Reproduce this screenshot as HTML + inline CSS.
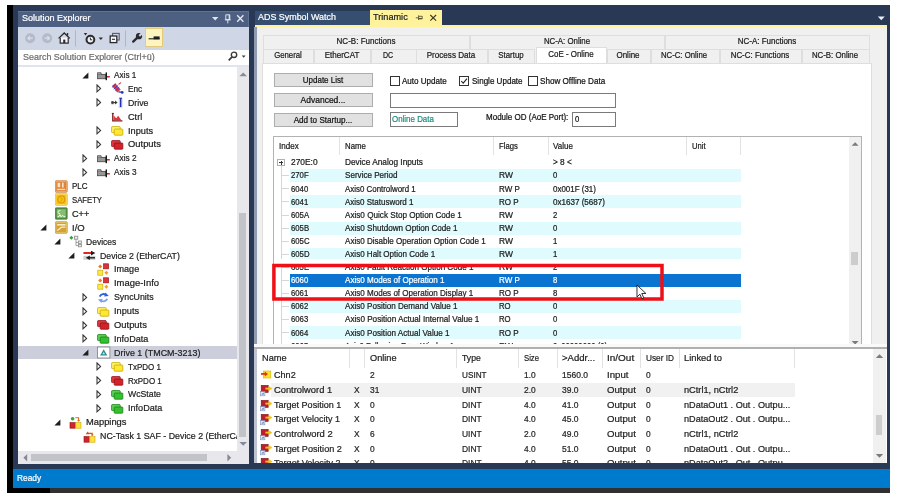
<!DOCTYPE html>
<html lang="en"><head><meta charset="utf-8"><title>TwinCAT - Trinamic CoE Online</title>
<style>
html,body{margin:0;padding:0;background:#fff;}
body{width:900px;height:499px;position:relative;overflow:hidden;font-family:"Liberation Sans",sans-serif;}
#root{position:absolute;left:0;top:0;width:900px;height:499px;overflow:hidden;background:#fff;will-change:transform;}
#root div,#root span,#root svg{position:absolute;}
#root div{box-sizing:border-box;}
.t{white-space:nowrap;font-family:"Liberation Sans",sans-serif;-webkit-text-stroke:0.22px;}
.clip{overflow:hidden;}
</style></head><body><div id="root">
<div style="left:7.00px;top:5.00px;width:883.00px;height:488.00px;background:#293955;"></div>
<div style="left:7.00px;top:5.00px;width:6.00px;height:488.00px;background:#000;"></div>
<div style="left:7.00px;top:487.80px;width:883.00px;height:5.20px;background:#303030;"></div>
<div style="left:7.00px;top:487.80px;width:43.00px;height:5.20px;background:#000;"></div>
<div style="left:13.00px;top:469.20px;width:877.00px;height:18.60px;background:#007acc;"></div>
<span class="t" style="left:16.50px;top:471.15px;font-size:9.3px;line-height:14px;color:#fff;transform:scaleX(0.900);transform-origin:left center;">Ready</span>
<div style="left:18.00px;top:10.50px;width:231.40px;height:16.50px;background:#4d6082;border-top:1px solid #5e729a;border-right:1px solid #5e729a;"></div>
<span class="t" style="left:21.50px;top:11.45px;font-size:9.3px;line-height:14px;color:#fff;transform:scaleX(0.969);transform-origin:left center;">Solution Explorer</span>
<div style="left:18.00px;top:27.00px;width:231.00px;height:22.50px;background:#cfd6e5;"></div>
<div style="left:18.00px;top:49.50px;width:231.00px;height:15.50px;background:#fff;"></div>
<div style="left:18.00px;top:65.00px;width:231.00px;height:1.50px;background:#dfe4ee;"></div>
<div style="left:18.00px;top:66.50px;width:231.00px;height:397.50px;background:#fff;"></div>
<span class="t" style="left:22.50px;top:49.85px;font-size:9.3px;line-height:14px;color:#6d6d6d;transform:scaleX(0.963);transform-origin:left center;">Search Solution Explorer (Ctrl+ü)</span>
<svg style="left:210px;top:13px" width="36" height="12" viewBox="0 0 36 12"><path d="M2 4h6.4l-3.2 3.4z" fill="#dfe6f2"/><path d="M15.800 1.800h4v5h-4z M14.800 6.800h6 M17.800 6.800v3.600" fill="none" stroke="#dfe6f2" stroke-width="0.95"/><path d="M19.200 1.800v5" stroke="#dfe6f2" stroke-width="1.100"/><path d="M27.2 2.2l6.2 6.6 M33.4 2.2l-6.2 6.6" stroke="#e6ebf5" stroke-width="1.3" fill="none"/></svg>
<svg style="left:18px;top:27px" width="231" height="23" viewBox="0 0 231 23"><circle cx="12.2" cy="11.2" r="5" fill="#b5bac9"/><path d="M14.8 11.2h-4.6m1.8-2l-2 2 2 2" stroke="#dde1ea" stroke-width="1.2" fill="none"/><circle cx="29.2" cy="11.2" r="5" fill="#b5bac9"/><path d="M26.6 11.2h4.6m-1.8-2l2 2-2 2" stroke="#dde1ea" stroke-width="1.2" fill="none"/><path d="M40.6 11.4l5.6-5.4 5.6 5.4" fill="none" stroke="#2b2b2b" stroke-width="1.3"/><path d="M42.2 10.6v5.6h8v-5.6" fill="#f4f6fa" stroke="#2b2b2b" stroke-width="1.2"/><rect x="45.2" y="12.6" width="2.1" height="3.4" fill="#2b2b2b"/><rect x="48.8" y="6" width="1.4" height="2.6" fill="#2b2b2b"/><rect x="57" y="3.5" width="1" height="16" fill="#aeb6c8"/><circle cx="72.4" cy="12.6" r="3.9" fill="#eef1f7" stroke="#2b2b2b" stroke-width="2"/><path d="M72.4 10.6v2.2h1.8" stroke="#2b2b2b" stroke-width="1" fill="none"/><path d="M65.8 6l3.4 0-1.7 2.6z" fill="#2b2b2b"/><path d="M80.6 10.6h4.4l-2.2 2.4z" fill="#2b2b2b"/><rect x="94.6" y="6.4" width="6.6" height="6.6" fill="#cfd6e5" stroke="#555b68" stroke-width="1.1"/><rect x="92.2" y="9" width="6.6" height="6.6" fill="#f4f6fa" stroke="#2b2b2b" stroke-width="1.3"/><path d="M94 12.3h3" stroke="#2b2b2b" stroke-width="1.1"/><rect x="107" y="3.5" width="1" height="16" fill="#aeb6c8"/><path d="M115.200 14.600L119.600 10.400" stroke="#2b2b2b" stroke-width="2.300" fill="none" stroke-linecap="round"/><circle cx="121" cy="9.200" r="3.100" fill="#2b2b2b"/><path d="M121.300 8.900L124.800 5.400" stroke="#cfd6e5" stroke-width="2.100"/><rect x="127.4" y="1.4" width="17" height="18" fill="#fdf4bf" stroke="#e5c365" stroke-width="0.8"/><path d="M130.6 11.8h11" stroke="#1e1e1e" stroke-width="1.1"/><rect x="135.6" y="9.4" width="6" height="2.9" fill="#1e1e1e"/></svg>
<svg style="left:226px;top:50px" width="22" height="14" viewBox="0 0 22 14"><circle cx="8" cy="4.8" r="2.7" fill="none" stroke="#3b3b3b" stroke-width="1.4"/><path d="M6.1 6.8l-3.4 3.6" stroke="#3b3b3b" stroke-width="1.7"/><path d="M15.8 5.6h3.8l-1.9 2.1z" fill="#3b3b3b"/></svg>
<div style="left:236.50px;top:66.50px;width:12.50px;height:384.00px;background:#e8e8ec;"></div>
<div style="left:239.20px;top:213.00px;width:6.80px;height:224.00px;background:#c2c3c9;"></div>
<svg style="left:236.5px;top:68px" width="12.5" height="12"><path d="M2.4 8.2l3.8-3.8 3.8 3.8z" fill="#868999"/></svg>
<svg style="left:236.5px;top:438px" width="12.5" height="12"><path d="M2.4 4l3.8 3.8 3.8-3.8z" fill="#868999"/></svg>
<div style="left:18.00px;top:450.50px;width:231.00px;height:13.50px;background:#e8e8ec;"></div>
<div style="left:31.00px;top:453.70px;width:176.00px;height:7.30px;background:#c2c3c9;"></div>
<svg style="left:18px;top:450.5px" width="14" height="13.5"><path d="M9.2 3l-3.8 3.8 3.8 3.8z" fill="#868999"/></svg>
<svg style="left:222px;top:450.5px" width="14" height="13.5"><path d="M5.4 3l3.8 3.8-3.8 3.8z" fill="#868999"/></svg>
<div style="left:236.50px;top:450.50px;width:12.50px;height:13.50px;background:#e8e8ec;"></div>
<div class="clip" style="left:18px;top:66.5px;width:218.5px;height:384px;">
<svg style="left:63.70px;top:5.10px" width="8" height="8"><path d="M6.400 0.400v6h-6z" fill="#1e1e1e"/></svg>
<svg style="left:79.10px;top:2.00px" width="13.5" height="13" viewBox="0 0 13.5 13"><rect x="0.300" y="5.400" width="8.400" height="4.300" fill="#979797" stroke="#4c4c4c" stroke-width="0.900"/><path d="M0.300 5.400v-1.600h3.800v1.600" fill="#b5b5b5" stroke="#4c4c4c" stroke-width="0.900"/><rect x="8.600" y="3.400" width="1.400" height="7.800" fill="#161616"/><rect x="10" y="7" width="2.800" height="1.500" fill="#d81f3a"/></svg>
<span class="t" style="left:95.70px;top:1.55px;font-size:9.3px;line-height:14px;color:#1e1e1e;transform:scaleX(0.881);transform-origin:left center;">Axis 1</span>
<svg style="left:77.80px;top:17.99px" width="7" height="9"><path d="M1 1l3.600 3.400-3.600 3.400z" fill="#fff" stroke="#333" stroke-width="1.050"/></svg>
<svg style="left:93.00px;top:15.89px" width="13.5" height="13" viewBox="0 0 13.5 13"><path d="M2.600 2.600L8 9" stroke="#e23a45" stroke-width="4.400"/><path d="M1.200 5.200l3.800-3.400M2.800 7l3.800-3.400M4.400 8.800l3.800-3.400" stroke="#3540c8" stroke-width="1"/><path d="M7.400 9.800l3 .4" stroke="#2b36c2" stroke-width="1.300"/><circle cx="11.200" cy="10.400" r="1.400" fill="#2b36c2"/><path d="M7.600 2.400l2.400-1.800" stroke="#d8232a" stroke-width="1.100"/></svg>
<span class="t" style="left:109.60px;top:15.44px;font-size:9.3px;line-height:14px;color:#1e1e1e;transform:scaleX(0.886);transform-origin:left center;">Enc</span>
<svg style="left:77.80px;top:31.87px" width="7" height="9"><path d="M1 1l3.600 3.400-3.600 3.400z" fill="#fff" stroke="#333" stroke-width="1.050"/></svg>
<svg style="left:93.00px;top:29.77px" width="13.5" height="13" viewBox="0 0 13.5 13"><rect x="7.800" y="1.400" width="3.600" height="10.400" fill="#c3c9f0"/><rect x="9" y="2.200" width="1.300" height="8.800" fill="#2330b0"/><rect x="8.400" y="1.800" width="2.500" height="1" fill="#2330b0"/><path d="M0.400 6.600h5" stroke="#3b3b3b" stroke-width="1.200"/><path d="M4 4.600l2.600 2-2.600 2z" fill="#3b3b3b"/><rect x="0.400" y="5" width="2.200" height="3.200" fill="#4a4a4a"/></svg>
<span class="t" style="left:109.60px;top:29.32px;font-size:9.3px;line-height:14px;color:#1e1e1e;transform:scaleX(0.945);transform-origin:left center;">Drive</span>
<svg style="left:93.00px;top:43.66px" width="13.5" height="13" viewBox="0 0 13.5 13"><path d="M1.8 3.2v7.6h9.6" stroke="#7a1515" stroke-width="1.3" fill="none"/><path d="M2.6 10.2V5.6l2.6 2.600 2-2.400 3.200 4.400z" fill="#e2343b"/><path d="M0.8 3.4h2" stroke="#7a1515" stroke-width="1"/></svg>
<span class="t" style="left:109.60px;top:43.21px;font-size:9.3px;line-height:14px;color:#1e1e1e;transform:scaleX(0.982);transform-origin:left center;">Ctrl</span>
<svg style="left:77.80px;top:59.64px" width="7" height="9"><path d="M1 1l3.600 3.400-3.600 3.400z" fill="#fff" stroke="#333" stroke-width="1.050"/></svg>
<svg style="left:93.00px;top:57.54px" width="13.5" height="13" viewBox="0 0 13.5 13"><rect x="0.600" y="2.600" width="8.600" height="6" rx="0.700" fill="#fff36a" stroke="#c8a800" stroke-width="0.8"/><rect x="3.200" y="5" width="8.600" height="6.200" rx="0.700" fill="#ffe833" stroke="#c8a800" stroke-width="0.8"/></svg>
<span class="t" style="left:109.60px;top:57.09px;font-size:9.3px;line-height:14px;color:#1e1e1e;transform:scaleX(0.991);transform-origin:left center;">Inputs</span>
<svg style="left:77.80px;top:73.53px" width="7" height="9"><path d="M1 1l3.600 3.400-3.600 3.400z" fill="#fff" stroke="#333" stroke-width="1.050"/></svg>
<svg style="left:93.00px;top:71.43px" width="13.5" height="13" viewBox="0 0 13.5 13"><rect x="0.600" y="2.600" width="8.600" height="6" rx="0.700" fill="#e5383f" stroke="#8e1118" stroke-width="0.8"/><rect x="3.200" y="5" width="8.600" height="6.200" rx="0.700" fill="#d3222a" stroke="#8e1118" stroke-width="0.8"/></svg>
<span class="t" style="left:109.60px;top:70.98px;font-size:9.3px;line-height:14px;color:#1e1e1e;transform:scaleX(1.010);transform-origin:left center;">Outputs</span>
<svg style="left:63.90px;top:87.41px" width="7" height="9"><path d="M1 1l3.600 3.400-3.600 3.400z" fill="#fff" stroke="#333" stroke-width="1.050"/></svg>
<svg style="left:79.10px;top:85.31px" width="13.5" height="13" viewBox="0 0 13.5 13"><rect x="0.300" y="5.400" width="8.400" height="4.300" fill="#979797" stroke="#4c4c4c" stroke-width="0.900"/><path d="M0.300 5.400v-1.600h3.800v1.600" fill="#b5b5b5" stroke="#4c4c4c" stroke-width="0.900"/><rect x="8.600" y="3.400" width="1.400" height="7.800" fill="#161616"/><rect x="10" y="7" width="2.800" height="1.500" fill="#d81f3a"/></svg>
<span class="t" style="left:95.70px;top:84.86px;font-size:9.3px;line-height:14px;color:#1e1e1e;transform:scaleX(0.888);transform-origin:left center;">Axis 2</span>
<svg style="left:63.90px;top:101.29px" width="7" height="9"><path d="M1 1l3.600 3.400-3.600 3.400z" fill="#fff" stroke="#333" stroke-width="1.050"/></svg>
<svg style="left:79.10px;top:99.19px" width="13.5" height="13" viewBox="0 0 13.5 13"><rect x="0.300" y="5.400" width="8.400" height="4.300" fill="#979797" stroke="#4c4c4c" stroke-width="0.900"/><path d="M0.300 5.400v-1.600h3.800v1.600" fill="#b5b5b5" stroke="#4c4c4c" stroke-width="0.900"/><rect x="8.600" y="3.400" width="1.400" height="7.800" fill="#161616"/><rect x="10" y="7" width="2.800" height="1.500" fill="#d81f3a"/></svg>
<span class="t" style="left:95.70px;top:98.75px;font-size:9.3px;line-height:14px;color:#1e1e1e;transform:scaleX(0.888);transform-origin:left center;">Axis 3</span>
<svg style="left:37.40px;top:113.08px" width="13.5" height="13" viewBox="0 0 13.5 13"><rect x="0.2" y="0.8" width="12" height="11.4" rx="0.8" fill="#e0843a" stroke="#c2702c" stroke-width="0.7"/><rect x="0.9" y="1.5" width="10.6" height="10" fill="none" stroke="#f1b57e" stroke-width="0.7"/><rect x="2.6" y="2.8" width="2.6" height="4.4" fill="#fbe3c8"/><rect x="7" y="2.6" width="1.6" height="5" fill="#fbe3c8"/><rect x="2.2" y="8.8" width="8" height="1.3" fill="#fbe3c8"/></svg>
<span class="t" style="left:54.00px;top:112.63px;font-size:9.3px;line-height:14px;color:#1e1e1e;transform:scaleX(0.862);transform-origin:left center;">PLC</span>
<svg style="left:37.40px;top:126.97px" width="13.5" height="13" viewBox="0 0 13.5 13"><rect x="0.2" y="0.8" width="12" height="11.4" rx="0.8" fill="#f5c20f" stroke="#dca80a" stroke-width="0.7"/><rect x="0.9" y="1.5" width="10.6" height="10" fill="none" stroke="#fbe27a" stroke-width="0.7"/><circle cx="6.3" cy="6.4" r="3.5" fill="none" stroke="#e39a07" stroke-width="1.2"/><path d="M5.6 4.4l1.8 2-1.8 2" stroke="#e39a07" stroke-width="1" fill="none"/></svg>
<span class="t" style="left:54.00px;top:126.52px;font-size:9.3px;line-height:14px;color:#1e1e1e;transform:scaleX(0.829);transform-origin:left center;">SAFETY</span>
<svg style="left:37.40px;top:140.85px" width="13.5" height="13" viewBox="0 0 13.5 13"><rect x="0.2" y="0.8" width="12" height="11.4" rx="0.8" fill="#5f9e4b" stroke="#3f7a30" stroke-width="0.7"/><rect x="1.2" y="1.8" width="10" height="9.4" fill="#86bd71" stroke="#3f7a30" stroke-width="0.7"/><path d="M5.4 3.6c-3-.8-3.4 3.6-.4 3M2.6 9.6h1.4l1-2 1.2 2.4 1.4-1.8 1 1.4h1.6" stroke="#eef8e6" stroke-width="1" fill="none"/></svg>
<span class="t" style="left:54.00px;top:140.40px;font-size:9.3px;line-height:14px;color:#1e1e1e;transform:scaleX(0.984);transform-origin:left center;">C++</span>
<svg style="left:22.00px;top:157.83px" width="8" height="8"><path d="M6.400 0.400v6h-6z" fill="#1e1e1e"/></svg>
<svg style="left:37.40px;top:154.73px" width="13.5" height="13" viewBox="0 0 13.5 13"><rect x="0.2" y="0.8" width="12" height="11.4" rx="0.8" fill="#d3a235" stroke="#b78829" stroke-width="0.7"/><rect x="0.9" y="1.5" width="10.6" height="10" fill="none" stroke="#ecc873" stroke-width="0.7"/><rect x="2.2" y="3" width="8.4" height="1.6" fill="#f9ecc9"/><path d="M2.4 9.6l4.2-3.4h3.8" stroke="#f9ecc9" stroke-width="1.3" fill="none"/></svg>
<span class="t" style="left:54.00px;top:154.29px;font-size:9.3px;line-height:14px;color:#1e1e1e;transform:scaleX(1.024);transform-origin:left center;">I/O</span>
<svg style="left:35.90px;top:171.72px" width="8" height="8"><path d="M6.400 0.400v6h-6z" fill="#1e1e1e"/></svg>
<svg style="left:51.30px;top:168.62px" width="13.5" height="13" viewBox="0 0 13.5 13"><path d="M2.400 0.800l2 2-2 2-2-2z" fill="#35a23a"/><rect x="5.400" y="1.200" width="3.400" height="3" fill="#ececec" stroke="#8a8a8a" stroke-width="0.800"/><path d="M7 4.200v6.400h2.400M7 7.400h2.400" stroke="#8a8a8a" stroke-width="0.800" fill="none"/><rect x="9.400" y="6" width="3" height="2.400" fill="#ececec" stroke="#8a8a8a" stroke-width="0.800"/><rect x="9.400" y="9.400" width="3" height="2.400" fill="#ececec" stroke="#8a8a8a" stroke-width="0.800"/></svg>
<span class="t" style="left:67.90px;top:168.17px;font-size:9.3px;line-height:14px;color:#1e1e1e;transform:scaleX(0.916);transform-origin:left center;">Devices</span>
<svg style="left:49.80px;top:185.60px" width="8" height="8"><path d="M6.400 0.400v6h-6z" fill="#1e1e1e"/></svg>
<svg style="left:65.20px;top:182.50px" width="13.5" height="13" viewBox="0 0 13.5 13"><rect x="0.400" y="3" width="9" height="2" fill="#e0252d"/><path d="M8 1.800l4.400 2.300-4.400 2.300z" fill="#1e1e1e"/><rect x="0.400" y="6.800" width="12" height="4" fill="#cfcfcf"/><path d="M5 8.800h7" stroke="#1e1e1e" stroke-width="1.400"/><path d="M6.800 6.600l-4 2.200 4 2.200z" fill="#1e1e1e"/></svg>
<span class="t" style="left:81.80px;top:182.06px;font-size:9.3px;line-height:14px;color:#1e1e1e;transform:scaleX(0.938);transform-origin:left center;">Device 2 (EtherCAT)</span>
<svg style="left:79.10px;top:196.39px" width="13.5" height="13" viewBox="0 0 13.5 13"><rect x="6.6" y="0.8" width="5" height="5" fill="#e0313a" stroke="#9c1a22" stroke-width="0.7"/><rect x="0.8" y="7.2" width="5" height="5" fill="#ffe944" stroke="#c9ad13" stroke-width="0.7"/><path d="M3.2 1.4l2 2-2 2-2-2z" fill="#f0781e"/><path d="M9.4 7.8l2 2-2 2-2-2z" fill="#f0a01e"/></svg>
<span class="t" style="left:95.70px;top:195.94px;font-size:9.3px;line-height:14px;color:#1e1e1e;transform:scaleX(0.975);transform-origin:left center;">Image</span>
<svg style="left:79.10px;top:210.27px" width="13.5" height="13" viewBox="0 0 13.5 13"><rect x="6.6" y="0.8" width="5" height="5" fill="#e0313a" stroke="#9c1a22" stroke-width="0.7"/><rect x="0.8" y="7.2" width="5" height="5" fill="#ffe944" stroke="#c9ad13" stroke-width="0.7"/><path d="M3.2 1.4l2 2-2 2-2-2z" fill="#f0781e"/><path d="M9.4 7.8l2 2-2 2-2-2z" fill="#f0a01e"/></svg>
<span class="t" style="left:95.70px;top:209.83px;font-size:9.3px;line-height:14px;color:#1e1e1e;transform:scaleX(1.014);transform-origin:left center;">Image-Info</span>
<svg style="left:63.90px;top:226.26px" width="7" height="9"><path d="M1 1l3.600 3.400-3.600 3.400z" fill="#fff" stroke="#333" stroke-width="1.050"/></svg>
<svg style="left:79.10px;top:224.16px" width="13.5" height="13" viewBox="0 0 13.5 13"><path d="M2.6 5.6c1.2-3 5-3.4 7-1.2" stroke="#2f62d8" stroke-width="1.8" fill="none"/><path d="M8.4 1.4l3.4 3.6-4.6 .6z" fill="#2f62d8"/><path d="M10.2 7.8c-1.2 3-5 3.4-7 1.2" stroke="#7d9fe8" stroke-width="1.8" fill="none"/><path d="M4.4 12l-3.4-3.6 4.6-.6z" fill="#7d9fe8"/></svg>
<span class="t" style="left:95.70px;top:223.71px;font-size:9.3px;line-height:14px;color:#1e1e1e;transform:scaleX(0.946);transform-origin:left center;">SyncUnits</span>
<svg style="left:63.90px;top:240.14px" width="7" height="9"><path d="M1 1l3.600 3.400-3.600 3.400z" fill="#fff" stroke="#333" stroke-width="1.050"/></svg>
<svg style="left:79.10px;top:238.04px" width="13.5" height="13" viewBox="0 0 13.5 13"><rect x="0.600" y="2.600" width="8.600" height="6" rx="0.700" fill="#fff36a" stroke="#c8a800" stroke-width="0.8"/><rect x="3.200" y="5" width="8.600" height="6.200" rx="0.700" fill="#ffe833" stroke="#c8a800" stroke-width="0.8"/></svg>
<span class="t" style="left:95.70px;top:237.60px;font-size:9.3px;line-height:14px;color:#1e1e1e;transform:scaleX(0.991);transform-origin:left center;">Inputs</span>
<svg style="left:63.90px;top:254.03px" width="7" height="9"><path d="M1 1l3.600 3.400-3.600 3.400z" fill="#fff" stroke="#333" stroke-width="1.050"/></svg>
<svg style="left:79.10px;top:251.93px" width="13.5" height="13" viewBox="0 0 13.5 13"><rect x="0.600" y="2.600" width="8.600" height="6" rx="0.700" fill="#e5383f" stroke="#8e1118" stroke-width="0.8"/><rect x="3.200" y="5" width="8.600" height="6.200" rx="0.700" fill="#d3222a" stroke="#8e1118" stroke-width="0.8"/></svg>
<span class="t" style="left:95.70px;top:251.48px;font-size:9.3px;line-height:14px;color:#1e1e1e;transform:scaleX(1.010);transform-origin:left center;">Outputs</span>
<svg style="left:63.90px;top:267.92px" width="7" height="9"><path d="M1 1l3.600 3.400-3.600 3.400z" fill="#fff" stroke="#333" stroke-width="1.050"/></svg>
<svg style="left:79.10px;top:265.81px" width="13.5" height="13" viewBox="0 0 13.5 13"><rect x="0.600" y="2.600" width="8.600" height="6" rx="0.700" fill="#59d553" stroke="#1c7d18" stroke-width="0.8"/><rect x="3.200" y="5" width="8.600" height="6.200" rx="0.700" fill="#33c12d" stroke="#1c7d18" stroke-width="0.8"/></svg>
<span class="t" style="left:95.70px;top:265.37px;font-size:9.3px;line-height:14px;color:#1e1e1e;transform:scaleX(0.978);transform-origin:left center;">InfoData</span>
<div style="left:0.00px;top:279.60px;width:218.50px;height:13.20px;background:#cccedb;"></div>
<svg style="left:63.70px;top:282.80px" width="8" height="8"><path d="M6.400 0.400v6h-6z" fill="#1e1e1e"/></svg>
<svg style="left:79.10px;top:279.70px" width="13.5" height="13" viewBox="0 0 13.5 13"><rect x="0.5" y="1" width="12.4" height="11" fill="#fff" stroke="#8a8a8a" stroke-width="0.9"/><path d="M6.7 3.2l3.6 6.4h-7.2z" fill="#2d8f92"/><path d="M6.7 6l1.3 2.3h-2.6z" fill="#d4eeee"/></svg>
<span class="t" style="left:95.70px;top:279.25px;font-size:9.3px;line-height:14px;color:#1e1e1e;transform:scaleX(0.961);transform-origin:left center;">Drive 1 (TMCM-3213)</span>
<svg style="left:77.80px;top:295.69px" width="7" height="9"><path d="M1 1l3.600 3.400-3.600 3.400z" fill="#fff" stroke="#333" stroke-width="1.050"/></svg>
<svg style="left:93.00px;top:293.58px" width="13.5" height="13" viewBox="0 0 13.5 13"><rect x="0.600" y="2.600" width="8.600" height="6" rx="0.700" fill="#fff36a" stroke="#c8a800" stroke-width="0.8"/><rect x="3.200" y="5" width="8.600" height="6.200" rx="0.700" fill="#ffe833" stroke="#c8a800" stroke-width="0.8"/></svg>
<span class="t" style="left:109.60px;top:293.14px;font-size:9.3px;line-height:14px;color:#1e1e1e;transform:scaleX(0.860);transform-origin:left center;">TxPDO 1</span>
<svg style="left:77.80px;top:309.57px" width="7" height="9"><path d="M1 1l3.600 3.400-3.600 3.400z" fill="#fff" stroke="#333" stroke-width="1.050"/></svg>
<svg style="left:93.00px;top:307.47px" width="13.5" height="13" viewBox="0 0 13.5 13"><rect x="0.600" y="2.600" width="8.600" height="6" rx="0.700" fill="#e5383f" stroke="#8e1118" stroke-width="0.8"/><rect x="3.200" y="5" width="8.600" height="6.200" rx="0.700" fill="#d3222a" stroke="#8e1118" stroke-width="0.8"/></svg>
<span class="t" style="left:109.60px;top:307.02px;font-size:9.3px;line-height:14px;color:#1e1e1e;transform:scaleX(0.861);transform-origin:left center;">RxPDO 1</span>
<svg style="left:77.80px;top:323.46px" width="7" height="9"><path d="M1 1l3.600 3.400-3.600 3.400z" fill="#fff" stroke="#333" stroke-width="1.050"/></svg>
<svg style="left:93.00px;top:321.36px" width="13.5" height="13" viewBox="0 0 13.5 13"><rect x="0.600" y="2.600" width="8.600" height="6" rx="0.700" fill="#59d553" stroke="#1c7d18" stroke-width="0.8"/><rect x="3.200" y="5" width="8.600" height="6.200" rx="0.700" fill="#33c12d" stroke="#1c7d18" stroke-width="0.8"/></svg>
<span class="t" style="left:109.60px;top:320.91px;font-size:9.3px;line-height:14px;color:#1e1e1e;transform:scaleX(0.936);transform-origin:left center;">WcState</span>
<svg style="left:77.80px;top:337.34px" width="7" height="9"><path d="M1 1l3.600 3.400-3.600 3.400z" fill="#fff" stroke="#333" stroke-width="1.050"/></svg>
<svg style="left:93.00px;top:335.24px" width="13.5" height="13" viewBox="0 0 13.5 13"><rect x="0.600" y="2.600" width="8.600" height="6" rx="0.700" fill="#59d553" stroke="#1c7d18" stroke-width="0.8"/><rect x="3.200" y="5" width="8.600" height="6.200" rx="0.700" fill="#33c12d" stroke="#1c7d18" stroke-width="0.8"/></svg>
<span class="t" style="left:109.60px;top:334.79px;font-size:9.3px;line-height:14px;color:#1e1e1e;transform:scaleX(0.978);transform-origin:left center;">InfoData</span>
<svg style="left:35.90px;top:352.23px" width="8" height="8"><path d="M6.400 0.400v6h-6z" fill="#1e1e1e"/></svg>
<svg style="left:51.30px;top:349.12px" width="13.5" height="13" viewBox="0 0 13.5 13"><rect x="1" y="6.6" width="5.2" height="5.6" fill="#d3222a" stroke="#8e1118" stroke-width="0.6"/><rect x="6.8" y="6.6" width="5.2" height="5.6" fill="#ffe13a" stroke="#c8a800" stroke-width="0.6"/><circle cx="3.6" cy="2.8" r="1.8" fill="#39a83c"/><path d="M6.4 1.8h3.2v3" stroke="#e06a1a" stroke-width="1.1" fill="none"/><path d="M8 4l1.6 1.8 1.6-1.8z" fill="#e06a1a"/></svg>
<span class="t" style="left:67.90px;top:348.68px;font-size:9.3px;line-height:14px;color:#1e1e1e;transform:scaleX(1.004);transform-origin:left center;">Mappings</span>
<svg style="left:65.20px;top:363.01px" width="13.5" height="13" viewBox="0 0 13.5 13"><rect x="1" y="6.6" width="5.2" height="5.6" fill="#d3222a" stroke="#8e1118" stroke-width="0.6"/><rect x="6.8" y="6.6" width="5.2" height="5.6" fill="#ffe13a" stroke="#c8a800" stroke-width="0.6"/><path d="M2.6 4.2l2-2.6 2 2.6z" fill="#e0521a"/><path d="M4.6 3.4h4.6v2" stroke="#e0521a" stroke-width="1.1" fill="none"/><path d="M7.8 4.4l1.4 1.6 1.4-1.6z" fill="#e0521a"/></svg>
<span class="t" style="left:81.80px;top:362.56px;font-size:9.3px;line-height:14px;color:#1e1e1e;transform:scaleX(0.950);transform-origin:left center;">NC-Task 1 SAF - Device 2 (EtherC/</span>
</div>
<div style="left:254.50px;top:10.50px;width:115.00px;height:14.50px;background:#364e6f;"></div>
<span class="t" style="left:258.00px;top:10.25px;font-size:9.3px;line-height:14px;color:#fff;transform:scaleX(0.959);transform-origin:left center;">ADS Symbol Watch</span>
<div style="left:369.50px;top:9.50px;width:72.00px;height:16.50px;background:#fff29d;"></div>
<span class="t" style="left:373.30px;top:10.25px;font-size:9.3px;line-height:14px;color:#1e1e1e;transform:scaleX(0.983);transform-origin:left center;">Trinamic</span>
<svg style="left:414px;top:12px" width="26" height="12" viewBox="0 0 26 12"><path d="M4.600 3.400v4.600M4.600 4.300h3.600v2.400h-3.600M1.800 5.800h2.800" stroke="#5a5432" stroke-width="0.900" fill="none"/><path d="M4.600 6.600h3.600" stroke="#5a5432" stroke-width="1.200"/><path d="M16.300 3l5.800 5.600M22.100 3l-5.800 5.600" stroke="#3a3620" stroke-width="1.100"/></svg>
<svg style="left:877px;top:14px" width="10" height="8"><path d="M0.8 2.6h7l-3.5 3.6z" fill="#e8edf6"/></svg>
<div style="left:254.50px;top:25.00px;width:632.50px;height:2.00px;background:#fff29d;"></div>
<div style="left:254.50px;top:27.00px;width:632.50px;height:319.00px;background:#f0f0f0;"></div>
<div style="left:254.40px;top:27.00px;width:2.20px;height:317.00px;background:#919bb0;"></div>
<div style="left:262.00px;top:62.50px;width:610.00px;height:283.50px;background:#fff;border:1px solid #dedede;border-bottom:none;"></div>
<div style="left:263.00px;top:34.50px;width:207.00px;height:14.00px;background:#f0f0f0;border:1px solid #dedede;border-bottom:none;"></div>
<span class="t" style="left:365.70px;top:34.30px;font-size:8.6px;line-height:14px;color:#1a1a1a;transform:translateX(-50%) scaleX(0.935);transform-origin:center center;">NC-B: Functions</span>
<div style="left:470.00px;top:34.50px;width:194.60px;height:14.00px;background:#f0f0f0;border:1px solid #dedede;border-bottom:none;"></div>
<span class="t" style="left:566.50px;top:34.30px;font-size:8.6px;line-height:14px;color:#1a1a1a;transform:translateX(-50%) scaleX(0.912);transform-origin:center center;">NC-A: Online</span>
<div style="left:664.60px;top:34.50px;width:205.40px;height:14.00px;background:#f0f0f0;border:1px solid #dedede;border-bottom:none;"></div>
<span class="t" style="left:766.50px;top:34.30px;font-size:8.6px;line-height:14px;color:#1a1a1a;transform:translateX(-50%) scaleX(0.930);transform-origin:center center;">NC-A: Functions</span>
<div style="left:263.00px;top:48.50px;width:51.00px;height:14.00px;background:#f0f0f0;border:1px solid #dedede;border-bottom:none;"></div>
<span class="t" style="left:287.70px;top:48.30px;font-size:8.6px;line-height:14px;color:#1a1a1a;transform:translateX(-50%) scaleX(0.905);transform-origin:center center;">General</span>
<div style="left:314.00px;top:48.50px;width:57.00px;height:14.00px;background:#f0f0f0;border:1px solid #dedede;border-bottom:none;"></div>
<span class="t" style="left:341.70px;top:48.30px;font-size:8.6px;line-height:14px;color:#1a1a1a;transform:translateX(-50%) scaleX(0.935);transform-origin:center center;">EtherCAT</span>
<div style="left:371.00px;top:48.50px;width:45.70px;height:14.00px;background:#f0f0f0;border:1px solid #dedede;border-bottom:none;"></div>
<span class="t" style="left:388.35px;top:48.30px;font-size:8.6px;line-height:14px;color:#1a1a1a;transform:translateX(-50%) scaleX(0.813);transform-origin:center center;">DC</span>
<div style="left:416.00px;top:48.50px;width:72.00px;height:14.00px;background:#f0f0f0;border:1px solid #dedede;border-bottom:none;"></div>
<span class="t" style="left:451.20px;top:48.30px;font-size:8.6px;line-height:14px;color:#1a1a1a;transform:translateX(-50%) scaleX(0.941);transform-origin:center center;">Process Data</span>
<div style="left:488.00px;top:48.50px;width:47.40px;height:14.00px;background:#f0f0f0;border:1px solid #dedede;border-bottom:none;"></div>
<span class="t" style="left:510.90px;top:48.30px;font-size:8.6px;line-height:14px;color:#1a1a1a;transform:translateX(-50%) scaleX(0.916);transform-origin:center center;">Startup</span>
<div style="left:606.80px;top:48.50px;width:44.20px;height:14.00px;background:#f0f0f0;border:1px solid #dedede;border-bottom:none;"></div>
<span class="t" style="left:628.10px;top:48.30px;font-size:8.6px;line-height:14px;color:#1a1a1a;transform:translateX(-50%) scaleX(0.929);transform-origin:center center;">Online</span>
<div style="left:651.00px;top:48.50px;width:68.50px;height:14.00px;background:#f0f0f0;border:1px solid #dedede;border-bottom:none;"></div>
<span class="t" style="left:684.45px;top:48.30px;font-size:8.6px;line-height:14px;color:#1a1a1a;transform:translateX(-50%) scaleX(0.903);transform-origin:center center;">NC-C: Online</span>
<div style="left:719.50px;top:48.50px;width:82.50px;height:14.00px;background:#f0f0f0;border:1px solid #dedede;border-bottom:none;"></div>
<span class="t" style="left:759.95px;top:48.30px;font-size:8.6px;line-height:14px;color:#1a1a1a;transform:translateX(-50%) scaleX(0.924);transform-origin:center center;">NC-C: Functions</span>
<div style="left:802.00px;top:48.50px;width:68.00px;height:14.00px;background:#f0f0f0;border:1px solid #dedede;border-bottom:none;"></div>
<span class="t" style="left:835.20px;top:48.30px;font-size:8.6px;line-height:14px;color:#1a1a1a;transform:translateX(-50%) scaleX(0.912);transform-origin:center center;">NC-B: Online</span>
<div style="left:536.00px;top:47.30px;width:71.00px;height:16.20px;background:#fff;border:1px solid #dedede;border-bottom:none;"></div>
<span class="t" style="left:570.70px;top:47.40px;font-size:8.6px;line-height:14px;color:#1a1a1a;transform:translateX(-50%) scaleX(0.922);transform-origin:center center;">CoE - Online</span>
<div style="left:273.60px;top:73.00px;width:99.40px;height:13.80px;background:#e1e1e1;border:1px solid #adadad;"></div>
<span class="t" style="left:323.30px;top:72.70px;font-size:8.6px;line-height:14px;color:#111;transform:translateX(-50%) scaleX(0.931);transform-origin:center center;">Update List</span>
<div style="left:273.60px;top:93.30px;width:99.40px;height:13.60px;background:#e1e1e1;border:1px solid #adadad;"></div>
<span class="t" style="left:323.30px;top:92.90px;font-size:8.6px;line-height:14px;color:#111;transform:translateX(-50%) scaleX(0.986);transform-origin:center center;">Advanced...</span>
<div style="left:273.60px;top:113.30px;width:99.40px;height:13.70px;background:#e1e1e1;border:1px solid #adadad;"></div>
<span class="t" style="left:323.30px;top:112.95px;font-size:8.6px;line-height:14px;color:#111;transform:translateX(-50%) scaleX(0.945);transform-origin:center center;">Add to Startup...</span>
<div style="left:389.60px;top:76.40px;width:10.00px;height:10.00px;background:#fff;border:1px solid #333;"></div>
<span class="t" style="left:402.40px;top:74.30px;font-size:8.6px;line-height:14px;color:#111;transform:scaleX(0.937);transform-origin:left center;">Auto Update</span>
<div style="left:459.00px;top:76.40px;width:10.00px;height:10.00px;background:#fff;border:1px solid #333;"></div>
<svg style="left:459.00px;top:76.40px" width="10" height="10"><path d="M2.200 5l2 2.200 3.800-4.600" stroke="#222" stroke-width="1.1" fill="none"/></svg>
<span class="t" style="left:471.80px;top:74.30px;font-size:8.6px;line-height:14px;color:#111;transform:scaleX(0.937);transform-origin:left center;">Single Update</span>
<div style="left:527.60px;top:76.40px;width:10.00px;height:10.00px;background:#fff;border:1px solid #333;"></div>
<span class="t" style="left:540.40px;top:74.30px;font-size:8.6px;line-height:14px;color:#111;transform:scaleX(0.944);transform-origin:left center;">Show Offline Data</span>
<div style="left:389.60px;top:92.90px;width:226.00px;height:14.70px;background:#fff;border:1px solid #7a7a7a;"></div>
<div style="left:389.60px;top:112.00px;width:68.20px;height:14.80px;background:#fff;border:1px solid #7a7a7a;"></div>
<span class="t" style="left:392.20px;top:112.30px;font-size:8.6px;line-height:14px;color:#1e8f80;transform:scaleX(0.923);transform-origin:left center;">Online Data</span>
<span class="t" style="left:486.00px;top:110.20px;font-size:8.6px;line-height:14px;color:#111;transform:scaleX(0.932);transform-origin:left center;">Module OD (AoE Port):</span>
<div style="left:572.20px;top:112.00px;width:43.40px;height:14.80px;background:#fff;border:1px solid #7a7a7a;"></div>
<span class="t" style="left:574.80px;top:112.30px;font-size:8.6px;line-height:14px;color:#111;transform:scaleX(0.900);transform-origin:left center;">0</span>
<div style="left:273.00px;top:135.50px;width:589.00px;height:210.50px;background:#fff;border:1px solid #b2b2b2;border-bottom:none;"></div>
<div style="left:339.10px;top:136.50px;width:1.00px;height:18.80px;background:#e2e2e2;"></div>
<div style="left:493.10px;top:136.50px;width:1.00px;height:18.80px;background:#e2e2e2;"></div>
<div style="left:548.00px;top:136.50px;width:1.00px;height:18.80px;background:#e2e2e2;"></div>
<div style="left:686.10px;top:136.50px;width:1.00px;height:18.80px;background:#e2e2e2;"></div>
<div style="left:740.10px;top:136.50px;width:1.00px;height:18.80px;background:#e2e2e2;"></div>
<span class="t" style="left:279.00px;top:138.80px;font-size:8.6px;line-height:14px;color:#1a1a1a;transform:scaleX(0.936);transform-origin:left center;">Index</span>
<span class="t" style="left:345.00px;top:138.80px;font-size:8.6px;line-height:14px;color:#1a1a1a;transform:scaleX(0.907);transform-origin:left center;">Name</span>
<span class="t" style="left:498.80px;top:138.80px;font-size:8.6px;line-height:14px;color:#1a1a1a;transform:scaleX(0.894);transform-origin:left center;">Flags</span>
<span class="t" style="left:553.00px;top:138.80px;font-size:8.6px;line-height:14px;color:#1a1a1a;transform:scaleX(0.932);transform-origin:left center;">Value</span>
<span class="t" style="left:691.80px;top:138.80px;font-size:8.6px;line-height:14px;color:#1a1a1a;transform:scaleX(0.889);transform-origin:left center;">Unit</span>
<div style="left:281.00px;top:162.60px;width:0.80px;height:183.40px;background:#d6d6d6;"></div>
<div style="left:289.60px;top:169.19px;width:451.00px;height:13.00px;background:#dffbfd;"></div>
<div style="left:281.00px;top:175.28px;width:8.40px;height:0.80px;background:#d6d6d6;"></div>
<div style="left:281.00px;top:188.37px;width:8.40px;height:0.80px;background:#d6d6d6;"></div>
<div style="left:289.60px;top:195.35px;width:451.00px;height:13.00px;background:#dffbfd;"></div>
<div style="left:281.00px;top:201.45px;width:8.40px;height:0.80px;background:#d6d6d6;"></div>
<div style="left:281.00px;top:214.54px;width:8.40px;height:0.80px;background:#d6d6d6;"></div>
<div style="left:289.60px;top:221.53px;width:451.00px;height:13.00px;background:#dffbfd;"></div>
<div style="left:281.00px;top:227.62px;width:8.40px;height:0.80px;background:#d6d6d6;"></div>
<div style="left:281.00px;top:240.71px;width:8.40px;height:0.80px;background:#d6d6d6;"></div>
<div style="left:289.60px;top:247.69px;width:451.00px;height:13.00px;background:#dffbfd;"></div>
<div style="left:281.00px;top:253.79px;width:8.40px;height:0.80px;background:#d6d6d6;"></div>
<div style="left:289.60px;top:274.06px;width:451.00px;height:12.50px;background:#0a74d0;"></div>
<div style="left:281.00px;top:279.97px;width:8.40px;height:0.80px;background:#d6d6d6;"></div>
<div style="left:281.00px;top:293.05px;width:8.40px;height:0.80px;background:#d6d6d6;"></div>
<div style="left:289.60px;top:300.03px;width:451.00px;height:13.00px;background:#dffbfd;"></div>
<div style="left:281.00px;top:306.13px;width:8.40px;height:0.80px;background:#d6d6d6;"></div>
<div style="left:281.00px;top:319.22px;width:8.40px;height:0.80px;background:#d6d6d6;"></div>
<div style="left:289.60px;top:326.21px;width:451.00px;height:13.00px;background:#dffbfd;"></div>
<div style="left:281.00px;top:332.31px;width:8.40px;height:0.80px;background:#d6d6d6;"></div>
<div style="left:281.00px;top:345.39px;width:8.40px;height:0.80px;background:#d6d6d6;"></div>
<div style="left:277.40px;top:159.00px;width:7.40px;height:7.40px;background:#fff;border:1px solid #b0b0b0;"></div>
<div style="left:279.20px;top:162.30px;width:3.80px;height:0.80px;background:#333;"></div>
<div style="left:280.70px;top:160.80px;width:0.80px;height:3.80px;background:#333;"></div>
<span class="t" style="left:291.30px;top:155.40px;font-size:8.6px;line-height:14px;color:#1a1a1a;transform:scaleX(0.976);transform-origin:left center;">270E:0</span>
<span class="t" style="left:344.80px;top:155.40px;font-size:8.6px;line-height:14px;color:#1a1a1a;transform:scaleX(0.965);transform-origin:left center;">Device Analog Inputs</span>
<span class="t" style="left:553.00px;top:155.40px;font-size:8.6px;line-height:14px;color:#1a1a1a;transform:scaleX(0.959);transform-origin:left center;">&gt; 8 &lt;</span>
<span class="t" style="left:291.30px;top:168.49px;font-size:8.6px;line-height:14px;color:#1a1a1a;transform:scaleX(0.900);transform-origin:left center;">270F</span>
<span class="t" style="left:344.80px;top:168.49px;font-size:8.6px;line-height:14px;color:#1a1a1a;transform:scaleX(0.941);transform-origin:left center;">Service Period</span>
<span class="t" style="left:498.80px;top:168.49px;font-size:8.6px;line-height:14px;color:#1a1a1a;transform:scaleX(0.981);transform-origin:left center;">RW</span>
<span class="t" style="left:553.00px;top:168.49px;font-size:8.6px;line-height:14px;color:#1a1a1a;transform:scaleX(0.900);transform-origin:left center;">0</span>
<span class="t" style="left:291.30px;top:181.57px;font-size:8.6px;line-height:14px;color:#1a1a1a;transform:scaleX(0.900);transform-origin:left center;">6040</span>
<span class="t" style="left:344.80px;top:181.57px;font-size:8.6px;line-height:14px;color:#1a1a1a;transform:scaleX(0.920);transform-origin:left center;">Axis0 Controlword 1</span>
<span class="t" style="left:498.80px;top:181.57px;font-size:8.6px;line-height:14px;color:#1a1a1a;transform:scaleX(0.933);transform-origin:left center;">RW P</span>
<span class="t" style="left:553.00px;top:181.57px;font-size:8.6px;line-height:14px;color:#1a1a1a;transform:scaleX(0.927);transform-origin:left center;">0x001F (31)</span>
<span class="t" style="left:291.30px;top:194.66px;font-size:8.6px;line-height:14px;color:#1a1a1a;transform:scaleX(0.900);transform-origin:left center;">6041</span>
<span class="t" style="left:344.80px;top:194.66px;font-size:8.6px;line-height:14px;color:#1a1a1a;transform:scaleX(0.931);transform-origin:left center;">Axis0 Statusword 1</span>
<span class="t" style="left:498.80px;top:194.66px;font-size:8.6px;line-height:14px;color:#1a1a1a;transform:scaleX(0.937);transform-origin:left center;">RO P</span>
<span class="t" style="left:553.00px;top:194.66px;font-size:8.6px;line-height:14px;color:#1a1a1a;transform:scaleX(0.938);transform-origin:left center;">0x1637 (5687)</span>
<span class="t" style="left:291.30px;top:207.74px;font-size:8.6px;line-height:14px;color:#1a1a1a;transform:scaleX(0.900);transform-origin:left center;">605A</span>
<span class="t" style="left:344.80px;top:207.74px;font-size:8.6px;line-height:14px;color:#1a1a1a;transform:scaleX(0.947);transform-origin:left center;">Axis0 Quick Stop Option Code 1</span>
<span class="t" style="left:498.80px;top:207.74px;font-size:8.6px;line-height:14px;color:#1a1a1a;transform:scaleX(0.981);transform-origin:left center;">RW</span>
<span class="t" style="left:553.00px;top:207.74px;font-size:8.6px;line-height:14px;color:#1a1a1a;transform:scaleX(0.900);transform-origin:left center;">2</span>
<span class="t" style="left:291.30px;top:220.83px;font-size:8.6px;line-height:14px;color:#1a1a1a;transform:scaleX(0.900);transform-origin:left center;">605B</span>
<span class="t" style="left:344.80px;top:220.83px;font-size:8.6px;line-height:14px;color:#1a1a1a;transform:scaleX(0.943);transform-origin:left center;">Axis0 Shutdown Option Code 1</span>
<span class="t" style="left:498.80px;top:220.83px;font-size:8.6px;line-height:14px;color:#1a1a1a;transform:scaleX(0.981);transform-origin:left center;">RW</span>
<span class="t" style="left:553.00px;top:220.83px;font-size:8.6px;line-height:14px;color:#1a1a1a;transform:scaleX(0.900);transform-origin:left center;">0</span>
<span class="t" style="left:291.30px;top:233.91px;font-size:8.6px;line-height:14px;color:#1a1a1a;transform:scaleX(0.900);transform-origin:left center;">605C</span>
<span class="t" style="left:344.80px;top:233.91px;font-size:8.6px;line-height:14px;color:#1a1a1a;transform:scaleX(0.938);transform-origin:left center;">Axis0 Disable Operation Option Code 1</span>
<span class="t" style="left:498.80px;top:233.91px;font-size:8.6px;line-height:14px;color:#1a1a1a;transform:scaleX(0.981);transform-origin:left center;">RW</span>
<span class="t" style="left:553.00px;top:233.91px;font-size:8.6px;line-height:14px;color:#1a1a1a;transform:scaleX(0.900);transform-origin:left center;">1</span>
<span class="t" style="left:291.30px;top:247.00px;font-size:8.6px;line-height:14px;color:#1a1a1a;transform:scaleX(0.900);transform-origin:left center;">605D</span>
<span class="t" style="left:344.80px;top:247.00px;font-size:8.6px;line-height:14px;color:#1a1a1a;transform:scaleX(0.934);transform-origin:left center;">Axis0 Halt Option Code 1</span>
<span class="t" style="left:498.80px;top:247.00px;font-size:8.6px;line-height:14px;color:#1a1a1a;transform:scaleX(0.981);transform-origin:left center;">RW</span>
<span class="t" style="left:553.00px;top:247.00px;font-size:8.6px;line-height:14px;color:#1a1a1a;transform:scaleX(0.900);transform-origin:left center;">1</span>
<span class="t" style="left:291.30px;top:273.17px;font-size:8.6px;line-height:14px;color:#fff;transform:scaleX(0.900);transform-origin:left center;">6060</span>
<span class="t" style="left:344.80px;top:273.17px;font-size:8.6px;line-height:14px;color:#fff;transform:scaleX(0.939);transform-origin:left center;">Axis0 Modes of Operation 1</span>
<span class="t" style="left:498.80px;top:273.17px;font-size:8.6px;line-height:14px;color:#fff;transform:scaleX(0.933);transform-origin:left center;">RW P</span>
<span class="t" style="left:553.00px;top:273.17px;font-size:8.6px;line-height:14px;color:#fff;transform:scaleX(0.900);transform-origin:left center;">8</span>
<span class="t" style="left:291.30px;top:286.25px;font-size:8.6px;line-height:14px;color:#1a1a1a;transform:scaleX(0.900);transform-origin:left center;">6061</span>
<span class="t" style="left:344.80px;top:286.25px;font-size:8.6px;line-height:14px;color:#1a1a1a;transform:scaleX(0.938);transform-origin:left center;">Axis0 Modes of Operation Display 1</span>
<span class="t" style="left:498.80px;top:286.25px;font-size:8.6px;line-height:14px;color:#1a1a1a;transform:scaleX(0.937);transform-origin:left center;">RO P</span>
<span class="t" style="left:553.00px;top:286.25px;font-size:8.6px;line-height:14px;color:#1a1a1a;transform:scaleX(0.900);transform-origin:left center;">8</span>
<span class="t" style="left:291.30px;top:299.34px;font-size:8.6px;line-height:14px;color:#1a1a1a;transform:scaleX(0.900);transform-origin:left center;">6062</span>
<span class="t" style="left:344.80px;top:299.34px;font-size:8.6px;line-height:14px;color:#1a1a1a;transform:scaleX(0.940);transform-origin:left center;">Axis0 Position Demand Value 1</span>
<span class="t" style="left:498.80px;top:299.34px;font-size:8.6px;line-height:14px;color:#1a1a1a;transform:scaleX(0.900);transform-origin:left center;">RO</span>
<span class="t" style="left:553.00px;top:299.34px;font-size:8.6px;line-height:14px;color:#1a1a1a;transform:scaleX(0.900);transform-origin:left center;">0</span>
<span class="t" style="left:291.30px;top:312.42px;font-size:8.6px;line-height:14px;color:#1a1a1a;transform:scaleX(0.900);transform-origin:left center;">6063</span>
<span class="t" style="left:344.80px;top:312.42px;font-size:8.6px;line-height:14px;color:#1a1a1a;transform:scaleX(0.948);transform-origin:left center;">Axis0 Position Actual Internal Value 1</span>
<span class="t" style="left:498.80px;top:312.42px;font-size:8.6px;line-height:14px;color:#1a1a1a;transform:scaleX(0.900);transform-origin:left center;">RO</span>
<span class="t" style="left:553.00px;top:312.42px;font-size:8.6px;line-height:14px;color:#1a1a1a;transform:scaleX(0.900);transform-origin:left center;">0</span>
<span class="t" style="left:291.30px;top:325.51px;font-size:8.6px;line-height:14px;color:#1a1a1a;transform:scaleX(0.900);transform-origin:left center;">6064</span>
<span class="t" style="left:344.80px;top:325.51px;font-size:8.6px;line-height:14px;color:#1a1a1a;transform:scaleX(0.944);transform-origin:left center;">Axis0 Position Actual Value 1</span>
<span class="t" style="left:498.80px;top:325.51px;font-size:8.6px;line-height:14px;color:#1a1a1a;transform:scaleX(0.937);transform-origin:left center;">RO P</span>
<span class="t" style="left:553.00px;top:325.51px;font-size:8.6px;line-height:14px;color:#1a1a1a;transform:scaleX(0.900);transform-origin:left center;">0</span>
<span class="t" style="left:291.30px;top:338.59px;font-size:8.6px;line-height:14px;color:#1a1a1a;transform:scaleX(0.900);transform-origin:left center;">6065</span>
<span class="t" style="left:344.80px;top:338.59px;font-size:8.6px;line-height:14px;color:#1a1a1a;transform:scaleX(0.900);transform-origin:left center;">Axis0 Following Error Window 1</span>
<span class="t" style="left:498.80px;top:338.59px;font-size:8.6px;line-height:14px;color:#1a1a1a;transform:scaleX(0.981);transform-origin:left center;">RW</span>
<span class="t" style="left:553.00px;top:338.59px;font-size:8.6px;line-height:14px;color:#1a1a1a;transform:scaleX(0.900);transform-origin:left center;">0x00000000 (0)</span>
<div class="clip" style="left:274px;top:267px;width:574px;height:6px;">
<span class="t" style="left:17.30px;top:-6.92px;font-size:8.6px;line-height:14px;color:#1a1a1a;transform:scaleX(0.900);transform-origin:left center;">605E</span>
<span class="t" style="left:70.80px;top:-6.92px;font-size:8.6px;line-height:14px;color:#1a1a1a;transform:scaleX(0.940);transform-origin:left center;">Axis0 Fault Reaction Option Code 1</span>
<span class="t" style="left:224.80px;top:-6.92px;font-size:8.6px;line-height:14px;color:#1a1a1a;transform:scaleX(0.981);transform-origin:left center;">RW</span>
<span class="t" style="left:279.00px;top:-6.92px;font-size:8.6px;line-height:14px;color:#1a1a1a;transform:scaleX(0.900);transform-origin:left center;">2</span>
<div style="left:7.00px;top:-0.12px;width:8.40px;height:0.80px;background:#d6d6d6;"></div>
</div>
<div style="left:848.70px;top:136.50px;width:12.30px;height:209.50px;background:#f0f0f0;"></div>
<div style="left:851.20px;top:252.00px;width:6.40px;height:13.40px;background:#cdcdcd;"></div>
<svg style="left:848.7px;top:139px" width="12.3" height="10"><path d="M2.6 6.8l3.5-3.5 3.5 3.5z" fill="#7a7a7a"/></svg>
<svg style="left:848.7px;top:338px" width="12.3" height="8"><path d="M2.6 3l3.5 3.5 3.5-3.5z" fill="#7a7a7a"/></svg>
<div style="left:274.00px;top:259.20px;width:574.00px;height:4.80px;background:#fff;"></div>
<svg style="left:268px;top:260px" width="400" height="46" viewBox="268 260 400 46"><rect x="273.900" y="265.500" width="388.100" height="33.500" fill="none" stroke="#ee1016" stroke-width="3.500"/></svg>
<svg style="left:636.4px;top:283.7px" width="12" height="17" viewBox="0 0 12.4 17.6"><path d="M1 1v12.4l3-2.8 2 4.6 2-.9-2-4.5h4.2z" fill="#fff" stroke="#111" stroke-width="0.9" stroke-linejoin="round"/></svg>
<div style="left:254.40px;top:343.60px;width:632.60px;height:119.80px;background:#fff;"></div>
<div style="left:254.40px;top:349.00px;width:2.20px;height:114.40px;background:#bcc2cf;"></div>
<div style="left:254.40px;top:343.60px;width:632.60px;height:3.80px;background:#f9f9f9;"></div>
<div style="left:254.40px;top:347.40px;width:632.60px;height:1.60px;background:#b0b0b0;"></div>
<div style="left:348.90px;top:349.00px;width:1.00px;height:18.50px;background:#e2e2e2;"></div>
<div style="left:364.40px;top:349.00px;width:1.00px;height:18.50px;background:#e2e2e2;"></div>
<div style="left:456.10px;top:349.00px;width:1.00px;height:18.50px;background:#e2e2e2;"></div>
<div style="left:518.00px;top:349.00px;width:1.00px;height:18.50px;background:#e2e2e2;"></div>
<div style="left:557.00px;top:349.00px;width:1.00px;height:18.50px;background:#e2e2e2;"></div>
<div style="left:601.80px;top:349.00px;width:1.00px;height:18.50px;background:#e2e2e2;"></div>
<div style="left:640.30px;top:349.00px;width:1.00px;height:18.50px;background:#e2e2e2;"></div>
<div style="left:679.30px;top:349.00px;width:1.00px;height:18.50px;background:#e2e2e2;"></div>
<div style="left:794.10px;top:349.00px;width:1.00px;height:18.50px;background:#e2e2e2;"></div>
<span class="t" style="left:261.50px;top:351.15px;font-size:9.3px;line-height:14px;color:#1e1e1e;transform:scaleX(0.992);transform-origin:left center;">Name</span>
<span class="t" style="left:370.00px;top:351.15px;font-size:9.3px;line-height:14px;color:#1e1e1e;transform:scaleX(0.989);transform-origin:left center;">Online</span>
<span class="t" style="left:462.40px;top:351.15px;font-size:9.3px;line-height:14px;color:#1e1e1e;transform:scaleX(0.932);transform-origin:left center;">Type</span>
<span class="t" style="left:523.70px;top:351.15px;font-size:9.3px;line-height:14px;color:#1e1e1e;transform:scaleX(0.829);transform-origin:left center;">Size</span>
<span class="t" style="left:562.00px;top:351.15px;font-size:9.3px;line-height:14px;color:#1e1e1e;transform:scaleX(1.027);transform-origin:left center;">&gt;Addr...</span>
<span class="t" style="left:607.00px;top:351.15px;font-size:9.3px;line-height:14px;color:#1e1e1e;transform:scaleX(1.074);transform-origin:left center;">In/Out</span>
<span class="t" style="left:646.00px;top:351.15px;font-size:9.3px;line-height:14px;color:#1e1e1e;transform:scaleX(0.888);transform-origin:left center;">User ID</span>
<span class="t" style="left:684.00px;top:351.15px;font-size:9.3px;line-height:14px;color:#1e1e1e;transform:scaleX(1.004);transform-origin:left center;">Linked to</span>
<div class="clip" style="left:255.8px;top:367px;width:616.9px;height:96.4px;">
<div style="left:15.70px;top:16.40px;width:523.10px;height:13.30px;background:#f1f1f1;"></div>
<span class="t" style="left:17.90px;top:1.35px;font-size:9.3px;line-height:14px;color:#1e1e1e;transform:scaleX(0.976);transform-origin:left center;">Chn2</span>
<span class="t" style="left:114.20px;top:1.35px;font-size:9.3px;line-height:14px;color:#1e1e1e;transform:scaleX(0.900);transform-origin:left center;">2</span>
<span class="t" style="left:206.60px;top:1.35px;font-size:9.3px;line-height:14px;color:#1e1e1e;transform:scaleX(0.882);transform-origin:left center;">USINT</span>
<span class="t" style="left:267.90px;top:1.35px;font-size:9.3px;line-height:14px;color:#1e1e1e;transform:scaleX(0.900);transform-origin:left center;">1.0</span>
<span class="t" style="left:306.20px;top:1.35px;font-size:9.3px;line-height:14px;color:#1e1e1e;transform:scaleX(0.914);transform-origin:left center;">1560.0</span>
<span class="t" style="left:351.20px;top:1.35px;font-size:9.3px;line-height:14px;color:#1e1e1e;transform:scaleX(1.035);transform-origin:left center;">Input</span>
<span class="t" style="left:390.20px;top:1.35px;font-size:9.3px;line-height:14px;color:#1e1e1e;transform:scaleX(0.900);transform-origin:left center;">0</span>
<svg style="left:4.40px;top:2.30px" width="13" height="12" viewBox="0 0 13 12"><rect x="3.4" y="2" width="7.4" height="7" fill="#ffe325" stroke="#d4b400" stroke-width="0.6"/><path d="M1 4.9h4.4" stroke="#e0341c" stroke-width="1.8"/><path d="M4.8 2.4l3.2 2.5-3.2 2.5z" fill="#e0341c"/></svg>
<span class="t" style="left:17.90px;top:16.01px;font-size:9.3px;line-height:14px;color:#1e1e1e;transform:scaleX(1.004);transform-origin:left center;">Controlword 1</span>
<span class="t" style="left:98.20px;top:16.01px;font-size:9.3px;line-height:14px;color:#1e1e1e;transform:scaleX(0.900);transform-origin:left center;">X</span>
<span class="t" style="left:114.20px;top:16.01px;font-size:9.3px;line-height:14px;color:#1e1e1e;transform:scaleX(0.900);transform-origin:left center;">31</span>
<span class="t" style="left:206.60px;top:16.01px;font-size:9.3px;line-height:14px;color:#1e1e1e;transform:scaleX(0.908);transform-origin:left center;">UINT</span>
<span class="t" style="left:267.90px;top:16.01px;font-size:9.3px;line-height:14px;color:#1e1e1e;transform:scaleX(0.900);transform-origin:left center;">2.0</span>
<span class="t" style="left:306.20px;top:16.01px;font-size:9.3px;line-height:14px;color:#1e1e1e;transform:scaleX(0.912);transform-origin:left center;">39.0</span>
<span class="t" style="left:351.20px;top:16.01px;font-size:9.3px;line-height:14px;color:#1e1e1e;transform:scaleX(1.035);transform-origin:left center;">Output</span>
<span class="t" style="left:390.20px;top:16.01px;font-size:9.3px;line-height:14px;color:#1e1e1e;transform:scaleX(0.900);transform-origin:left center;">0</span>
<span class="t" style="left:428.20px;top:16.01px;font-size:9.3px;line-height:14px;color:#1e1e1e;transform:scaleX(0.991);transform-origin:left center;">nCtrl1, nCtrl2</span>
<svg style="left:4.40px;top:16.96px" width="13.5" height="13" viewBox="0 0 13.5 13"><rect x="1.2" y="1.4" width="7" height="7" fill="#b9202b" stroke="#7e0f17" stroke-width="0.6"/><path d="M5.4 4.6h4" stroke="#f5c21a" stroke-width="1.9"/><path d="M8.6 1.9l3.8 2.7-3.8 2.7z" fill="#f5c21a"/><rect x="0.3" y="7.6" width="4.6" height="4.2" fill="#dfe6f1" stroke="#7d93b8" stroke-width="0.6"/><path d="M1.4 10.6l2.2-2v2z" fill="#3c6fc0"/></svg>
<span class="t" style="left:17.90px;top:30.67px;font-size:9.3px;line-height:14px;color:#1e1e1e;transform:scaleX(0.971);transform-origin:left center;">Target Position 1</span>
<span class="t" style="left:98.20px;top:30.67px;font-size:9.3px;line-height:14px;color:#1e1e1e;transform:scaleX(0.900);transform-origin:left center;">X</span>
<span class="t" style="left:114.20px;top:30.67px;font-size:9.3px;line-height:14px;color:#1e1e1e;transform:scaleX(0.900);transform-origin:left center;">0</span>
<span class="t" style="left:206.60px;top:30.67px;font-size:9.3px;line-height:14px;color:#1e1e1e;transform:scaleX(0.908);transform-origin:left center;">DINT</span>
<span class="t" style="left:267.90px;top:30.67px;font-size:9.3px;line-height:14px;color:#1e1e1e;transform:scaleX(0.900);transform-origin:left center;">4.0</span>
<span class="t" style="left:306.20px;top:30.67px;font-size:9.3px;line-height:14px;color:#1e1e1e;transform:scaleX(0.912);transform-origin:left center;">41.0</span>
<span class="t" style="left:351.20px;top:30.67px;font-size:9.3px;line-height:14px;color:#1e1e1e;transform:scaleX(1.035);transform-origin:left center;">Output</span>
<span class="t" style="left:390.20px;top:30.67px;font-size:9.3px;line-height:14px;color:#1e1e1e;transform:scaleX(0.900);transform-origin:left center;">0</span>
<span class="t" style="left:428.20px;top:30.67px;font-size:9.3px;line-height:14px;color:#1e1e1e;transform:scaleX(0.980);transform-origin:left center;">nDataOut1 . Out . Outpu...</span>
<svg style="left:4.40px;top:31.62px" width="13.5" height="13" viewBox="0 0 13.5 13"><rect x="1.2" y="1.4" width="7" height="7" fill="#b9202b" stroke="#7e0f17" stroke-width="0.6"/><path d="M5.4 4.6h4" stroke="#f5c21a" stroke-width="1.9"/><path d="M8.6 1.9l3.8 2.7-3.8 2.7z" fill="#f5c21a"/><rect x="0.3" y="7.6" width="4.6" height="4.2" fill="#dfe6f1" stroke="#7d93b8" stroke-width="0.6"/><path d="M1.4 10.6l2.2-2v2z" fill="#3c6fc0"/></svg>
<span class="t" style="left:17.90px;top:45.33px;font-size:9.3px;line-height:14px;color:#1e1e1e;transform:scaleX(0.966);transform-origin:left center;">Target Velocity 1</span>
<span class="t" style="left:98.20px;top:45.33px;font-size:9.3px;line-height:14px;color:#1e1e1e;transform:scaleX(0.900);transform-origin:left center;">X</span>
<span class="t" style="left:114.20px;top:45.33px;font-size:9.3px;line-height:14px;color:#1e1e1e;transform:scaleX(0.900);transform-origin:left center;">0</span>
<span class="t" style="left:206.60px;top:45.33px;font-size:9.3px;line-height:14px;color:#1e1e1e;transform:scaleX(0.908);transform-origin:left center;">DINT</span>
<span class="t" style="left:267.90px;top:45.33px;font-size:9.3px;line-height:14px;color:#1e1e1e;transform:scaleX(0.900);transform-origin:left center;">4.0</span>
<span class="t" style="left:306.20px;top:45.33px;font-size:9.3px;line-height:14px;color:#1e1e1e;transform:scaleX(0.912);transform-origin:left center;">45.0</span>
<span class="t" style="left:351.20px;top:45.33px;font-size:9.3px;line-height:14px;color:#1e1e1e;transform:scaleX(1.035);transform-origin:left center;">Output</span>
<span class="t" style="left:390.20px;top:45.33px;font-size:9.3px;line-height:14px;color:#1e1e1e;transform:scaleX(0.900);transform-origin:left center;">0</span>
<span class="t" style="left:428.20px;top:45.33px;font-size:9.3px;line-height:14px;color:#1e1e1e;transform:scaleX(0.980);transform-origin:left center;">nDataOut2 . Out . Outpu...</span>
<svg style="left:4.40px;top:46.28px" width="13.5" height="13" viewBox="0 0 13.5 13"><rect x="1.2" y="1.4" width="7" height="7" fill="#b9202b" stroke="#7e0f17" stroke-width="0.6"/><path d="M5.4 4.6h4" stroke="#f5c21a" stroke-width="1.9"/><path d="M8.6 1.9l3.8 2.7-3.8 2.7z" fill="#f5c21a"/><rect x="0.3" y="7.6" width="4.6" height="4.2" fill="#dfe6f1" stroke="#7d93b8" stroke-width="0.6"/><path d="M1.4 10.6l2.2-2v2z" fill="#3c6fc0"/></svg>
<span class="t" style="left:17.90px;top:59.99px;font-size:9.3px;line-height:14px;color:#1e1e1e;transform:scaleX(1.014);transform-origin:left center;">Controlword 2</span>
<span class="t" style="left:98.20px;top:59.99px;font-size:9.3px;line-height:14px;color:#1e1e1e;transform:scaleX(0.900);transform-origin:left center;">X</span>
<span class="t" style="left:114.20px;top:59.99px;font-size:9.3px;line-height:14px;color:#1e1e1e;transform:scaleX(0.900);transform-origin:left center;">6</span>
<span class="t" style="left:206.60px;top:59.99px;font-size:9.3px;line-height:14px;color:#1e1e1e;transform:scaleX(0.908);transform-origin:left center;">UINT</span>
<span class="t" style="left:267.90px;top:59.99px;font-size:9.3px;line-height:14px;color:#1e1e1e;transform:scaleX(0.900);transform-origin:left center;">2.0</span>
<span class="t" style="left:306.20px;top:59.99px;font-size:9.3px;line-height:14px;color:#1e1e1e;transform:scaleX(0.912);transform-origin:left center;">49.0</span>
<span class="t" style="left:351.20px;top:59.99px;font-size:9.3px;line-height:14px;color:#1e1e1e;transform:scaleX(1.035);transform-origin:left center;">Output</span>
<span class="t" style="left:390.20px;top:59.99px;font-size:9.3px;line-height:14px;color:#1e1e1e;transform:scaleX(0.900);transform-origin:left center;">0</span>
<span class="t" style="left:428.20px;top:59.99px;font-size:9.3px;line-height:14px;color:#1e1e1e;transform:scaleX(0.991);transform-origin:left center;">nCtrl1, nCtrl2</span>
<svg style="left:4.40px;top:60.94px" width="13.5" height="13" viewBox="0 0 13.5 13"><rect x="1.2" y="1.4" width="7" height="7" fill="#b9202b" stroke="#7e0f17" stroke-width="0.6"/><path d="M5.4 4.6h4" stroke="#f5c21a" stroke-width="1.9"/><path d="M8.6 1.9l3.8 2.7-3.8 2.7z" fill="#f5c21a"/><rect x="0.3" y="7.6" width="4.6" height="4.2" fill="#dfe6f1" stroke="#7d93b8" stroke-width="0.6"/><path d="M1.4 10.6l2.2-2v2z" fill="#3c6fc0"/></svg>
<span class="t" style="left:17.90px;top:74.65px;font-size:9.3px;line-height:14px;color:#1e1e1e;transform:scaleX(0.980);transform-origin:left center;">Target Position 2</span>
<span class="t" style="left:98.20px;top:74.65px;font-size:9.3px;line-height:14px;color:#1e1e1e;transform:scaleX(0.900);transform-origin:left center;">X</span>
<span class="t" style="left:114.20px;top:74.65px;font-size:9.3px;line-height:14px;color:#1e1e1e;transform:scaleX(0.900);transform-origin:left center;">0</span>
<span class="t" style="left:206.60px;top:74.65px;font-size:9.3px;line-height:14px;color:#1e1e1e;transform:scaleX(0.908);transform-origin:left center;">DINT</span>
<span class="t" style="left:267.90px;top:74.65px;font-size:9.3px;line-height:14px;color:#1e1e1e;transform:scaleX(0.900);transform-origin:left center;">4.0</span>
<span class="t" style="left:306.20px;top:74.65px;font-size:9.3px;line-height:14px;color:#1e1e1e;transform:scaleX(0.912);transform-origin:left center;">51.0</span>
<span class="t" style="left:351.20px;top:74.65px;font-size:9.3px;line-height:14px;color:#1e1e1e;transform:scaleX(1.035);transform-origin:left center;">Output</span>
<span class="t" style="left:390.20px;top:74.65px;font-size:9.3px;line-height:14px;color:#1e1e1e;transform:scaleX(0.900);transform-origin:left center;">0</span>
<span class="t" style="left:428.20px;top:74.65px;font-size:9.3px;line-height:14px;color:#1e1e1e;transform:scaleX(0.980);transform-origin:left center;">nDataOut1 . Out . Outpu...</span>
<svg style="left:4.40px;top:75.60px" width="13.5" height="13" viewBox="0 0 13.5 13"><rect x="1.2" y="1.4" width="7" height="7" fill="#b9202b" stroke="#7e0f17" stroke-width="0.6"/><path d="M5.4 4.6h4" stroke="#f5c21a" stroke-width="1.9"/><path d="M8.6 1.9l3.8 2.7-3.8 2.7z" fill="#f5c21a"/><rect x="0.3" y="7.6" width="4.6" height="4.2" fill="#dfe6f1" stroke="#7d93b8" stroke-width="0.6"/><path d="M1.4 10.6l2.2-2v2z" fill="#3c6fc0"/></svg>
<span class="t" style="left:17.90px;top:89.31px;font-size:9.3px;line-height:14px;color:#1e1e1e;transform:scaleX(0.975);transform-origin:left center;">Target Velocity 2</span>
<span class="t" style="left:98.20px;top:89.31px;font-size:9.3px;line-height:14px;color:#1e1e1e;transform:scaleX(0.900);transform-origin:left center;">X</span>
<span class="t" style="left:114.20px;top:89.31px;font-size:9.3px;line-height:14px;color:#1e1e1e;transform:scaleX(0.900);transform-origin:left center;">0</span>
<span class="t" style="left:206.60px;top:89.31px;font-size:9.3px;line-height:14px;color:#1e1e1e;transform:scaleX(0.908);transform-origin:left center;">DINT</span>
<span class="t" style="left:267.90px;top:89.31px;font-size:9.3px;line-height:14px;color:#1e1e1e;transform:scaleX(0.900);transform-origin:left center;">4.0</span>
<span class="t" style="left:306.20px;top:89.31px;font-size:9.3px;line-height:14px;color:#1e1e1e;transform:scaleX(0.912);transform-origin:left center;">55.0</span>
<span class="t" style="left:351.20px;top:89.31px;font-size:9.3px;line-height:14px;color:#1e1e1e;transform:scaleX(1.035);transform-origin:left center;">Output</span>
<span class="t" style="left:390.20px;top:89.31px;font-size:9.3px;line-height:14px;color:#1e1e1e;transform:scaleX(0.900);transform-origin:left center;">0</span>
<span class="t" style="left:428.20px;top:89.31px;font-size:9.3px;line-height:14px;color:#1e1e1e;transform:scaleX(0.980);transform-origin:left center;">nDataOut2 . Out . Outpu...</span>
<svg style="left:4.40px;top:90.26px" width="13.5" height="13" viewBox="0 0 13.5 13"><rect x="1.2" y="1.4" width="7" height="7" fill="#b9202b" stroke="#7e0f17" stroke-width="0.6"/><path d="M5.4 4.6h4" stroke="#f5c21a" stroke-width="1.9"/><path d="M8.6 1.9l3.8 2.7-3.8 2.7z" fill="#f5c21a"/><rect x="0.3" y="7.6" width="4.6" height="4.2" fill="#dfe6f1" stroke="#7d93b8" stroke-width="0.6"/><path d="M1.4 10.6l2.2-2v2z" fill="#3c6fc0"/></svg>
</div>
<div style="left:872.50px;top:349.00px;width:13.50px;height:114.40px;background:#f0f0f0;"></div>
<div style="left:875.60px;top:415.00px;width:6.40px;height:20.40px;background:#cdcdcd;"></div>
<svg style="left:872.7px;top:351px" width="13" height="10"><path d="M2.8 7l3.7-3.7 3.7 3.7z" fill="#7a7a7a"/></svg>
<svg style="left:872.7px;top:451px" width="13" height="10"><path d="M2.8 3l3.7 3.7 3.7-3.7z" fill="#7a7a7a"/></svg>
</div></body></html>
